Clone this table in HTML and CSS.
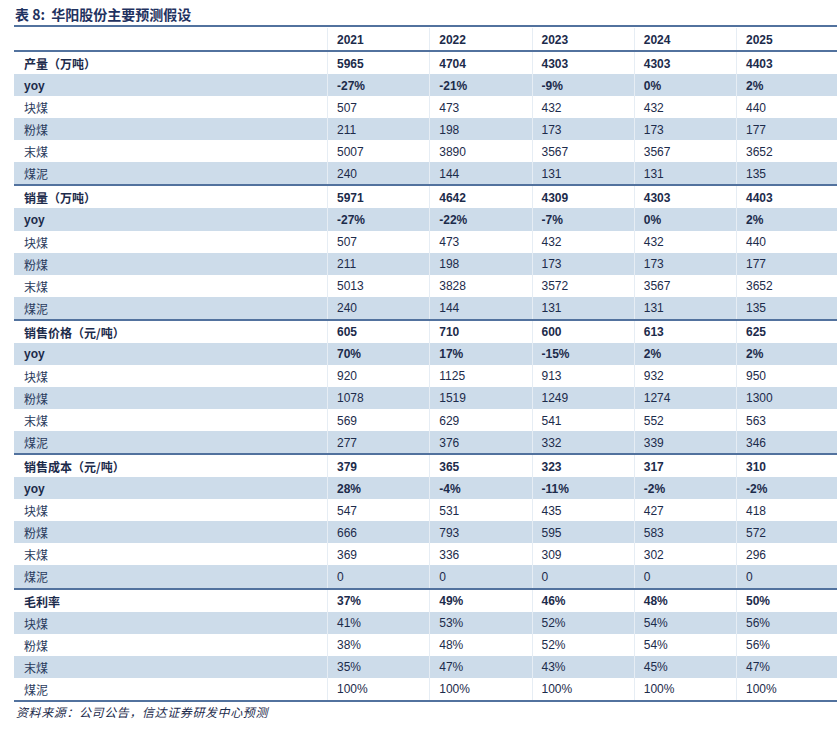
FILE: index.html
```html
<!DOCTYPE html>
<html lang="zh">
<head>
<meta charset="utf-8">
<link rel="stylesheet" href="styles.css">
</head>
<body>
<div class="page">
  <div class="title">表 8:&nbsp; 华阳股份主要预测假设</div>
  <div class="tbl">
    <div class="head row"><div class="lab"></div><div class="c">2021</div><div class="c">2022</div><div class="c">2023</div><div class="c">2024</div><div class="c">2025</div></div>

    <div class="group">
      <div class="row b"><div class="lab">产量（万吨）</div><div class="c">5965</div><div class="c">4704</div><div class="c">4303</div><div class="c">4303</div><div class="c">4403</div></div>
      <div class="row b alt"><div class="lab en">yoy</div><div class="c">-27%</div><div class="c">-21%</div><div class="c">-9%</div><div class="c">0%</div><div class="c">2%</div></div>
      <div class="row"><div class="lab">块煤</div><div class="c">507</div><div class="c">473</div><div class="c">432</div><div class="c">432</div><div class="c">440</div></div>
      <div class="row alt"><div class="lab">粉煤</div><div class="c">211</div><div class="c">198</div><div class="c">173</div><div class="c">173</div><div class="c">177</div></div>
      <div class="row"><div class="lab">末煤</div><div class="c">5007</div><div class="c">3890</div><div class="c">3567</div><div class="c">3567</div><div class="c">3652</div></div>
      <div class="row alt"><div class="lab">煤泥</div><div class="c">240</div><div class="c">144</div><div class="c">131</div><div class="c">131</div><div class="c">135</div></div>
    </div>

    <div class="group">
      <div class="row b"><div class="lab">销量（万吨）</div><div class="c">5971</div><div class="c">4642</div><div class="c">4309</div><div class="c">4303</div><div class="c">4403</div></div>
      <div class="row b alt"><div class="lab en">yoy</div><div class="c">-27%</div><div class="c">-22%</div><div class="c">-7%</div><div class="c">0%</div><div class="c">2%</div></div>
      <div class="row"><div class="lab">块煤</div><div class="c">507</div><div class="c">473</div><div class="c">432</div><div class="c">432</div><div class="c">440</div></div>
      <div class="row alt"><div class="lab">粉煤</div><div class="c">211</div><div class="c">198</div><div class="c">173</div><div class="c">173</div><div class="c">177</div></div>
      <div class="row"><div class="lab">末煤</div><div class="c">5013</div><div class="c">3828</div><div class="c">3572</div><div class="c">3567</div><div class="c">3652</div></div>
      <div class="row alt"><div class="lab">煤泥</div><div class="c">240</div><div class="c">144</div><div class="c">131</div><div class="c">131</div><div class="c">135</div></div>
    </div>

    <div class="group">
      <div class="row b"><div class="lab">销售价格（元/吨）</div><div class="c">605</div><div class="c">710</div><div class="c">600</div><div class="c">613</div><div class="c">625</div></div>
      <div class="row b alt"><div class="lab en">yoy</div><div class="c">70%</div><div class="c">17%</div><div class="c">-15%</div><div class="c">2%</div><div class="c">2%</div></div>
      <div class="row"><div class="lab">块煤</div><div class="c">920</div><div class="c">1125</div><div class="c">913</div><div class="c">932</div><div class="c">950</div></div>
      <div class="row alt"><div class="lab">粉煤</div><div class="c">1078</div><div class="c">1519</div><div class="c">1249</div><div class="c">1274</div><div class="c">1300</div></div>
      <div class="row"><div class="lab">末煤</div><div class="c">569</div><div class="c">629</div><div class="c">541</div><div class="c">552</div><div class="c">563</div></div>
      <div class="row alt"><div class="lab">煤泥</div><div class="c">277</div><div class="c">376</div><div class="c">332</div><div class="c">339</div><div class="c">346</div></div>
    </div>

    <div class="group">
      <div class="row b"><div class="lab">销售成本（元/吨）</div><div class="c">379</div><div class="c">365</div><div class="c">323</div><div class="c">317</div><div class="c">310</div></div>
      <div class="row b alt"><div class="lab en">yoy</div><div class="c">28%</div><div class="c">-4%</div><div class="c">-11%</div><div class="c">-2%</div><div class="c">-2%</div></div>
      <div class="row"><div class="lab">块煤</div><div class="c">547</div><div class="c">531</div><div class="c">435</div><div class="c">427</div><div class="c">418</div></div>
      <div class="row alt"><div class="lab">粉煤</div><div class="c">666</div><div class="c">793</div><div class="c">595</div><div class="c">583</div><div class="c">572</div></div>
      <div class="row"><div class="lab">末煤</div><div class="c">369</div><div class="c">336</div><div class="c">309</div><div class="c">302</div><div class="c">296</div></div>
      <div class="row alt"><div class="lab">煤泥</div><div class="c">0</div><div class="c">0</div><div class="c">0</div><div class="c">0</div><div class="c">0</div></div>
    </div>

    <div class="group last">
      <div class="row b"><div class="lab">毛利率</div><div class="c">37%</div><div class="c">49%</div><div class="c">46%</div><div class="c">48%</div><div class="c">50%</div></div>
      <div class="row alt"><div class="lab">块煤</div><div class="c">41%</div><div class="c">53%</div><div class="c">52%</div><div class="c">54%</div><div class="c">56%</div></div>
      <div class="row"><div class="lab">粉煤</div><div class="c">38%</div><div class="c">48%</div><div class="c">52%</div><div class="c">54%</div><div class="c">56%</div></div>
      <div class="row alt"><div class="lab">末煤</div><div class="c">35%</div><div class="c">47%</div><div class="c">43%</div><div class="c">45%</div><div class="c">47%</div></div>
      <div class="row"><div class="lab">煤泥</div><div class="c">100%</div><div class="c">100%</div><div class="c">100%</div><div class="c">100%</div><div class="c">100%</div></div>
    </div>
  </div>
  <div class="source">资料来源：公司公告，信达证券研发中心预测</div>
</div>
</body>
</html>
```

FILE: styles.css
```css
html, body {
  margin: 0;
  padding: 0;
  background: #ffffff;
}

.page {
  padding: 6px 0 0 14px;
  width: 823px;
  color: #1c2b4b;
  font-family: "Liberation Sans", Arial, "Noto Sans CJK SC", sans-serif;
}

.title {
  height: 19px;
  line-height: 16px;
  font-family: "Noto Sans CJK SC", sans-serif;
  font-weight: 700;
  font-size: 14px;
  color: #1f3260;
  padding-left: 1px;
}

.tbl {
  border-top: 2px solid #52729e;
  border-bottom: 2px solid #52729e;
}

.group {
  border-top: 2px solid #52729e;
}

.row {
  display: grid;
  grid-template-columns: 313px 102.25px 102.25px 102.25px 102.25px 101px;
  height: 22.07px;
  align-items: stretch;
  font-size: 12px;
}

.row.head {
  height: 23px;
  padding-top: 1px;
  box-sizing: border-box;
}

.row.alt {
  background: #cddcea;
}

.row > div {
  display: flex;
  align-items: center;
  white-space: nowrap;
  padding-top: 1px;
}

.lab {
  padding-left: 10px;
  font-family: "Noto Sans CJK SC", sans-serif;
  font-size: 12px;
  color: #2a3a5c;
}

.lab.en {
  font-family: "Liberation Sans", Arial, sans-serif;
  color: #1c2b4b;
}

.c {
  padding-left: 9px;
  border-left: 1px solid #e6edf4;
}

.row.b > div {
  font-weight: 700;
  color: #1c2b4b;
}

.head > div {
  font-weight: 700;
  color: #1c2b4b;
}

.source {
  margin-top: 1px;
  padding-left: 2px;
  font-family: "Noto Sans CJK SC", sans-serif;
  font-style: italic;
  font-size: 12px;
  letter-spacing: 0.6px;
  color: #1c2b4b;
}
```
